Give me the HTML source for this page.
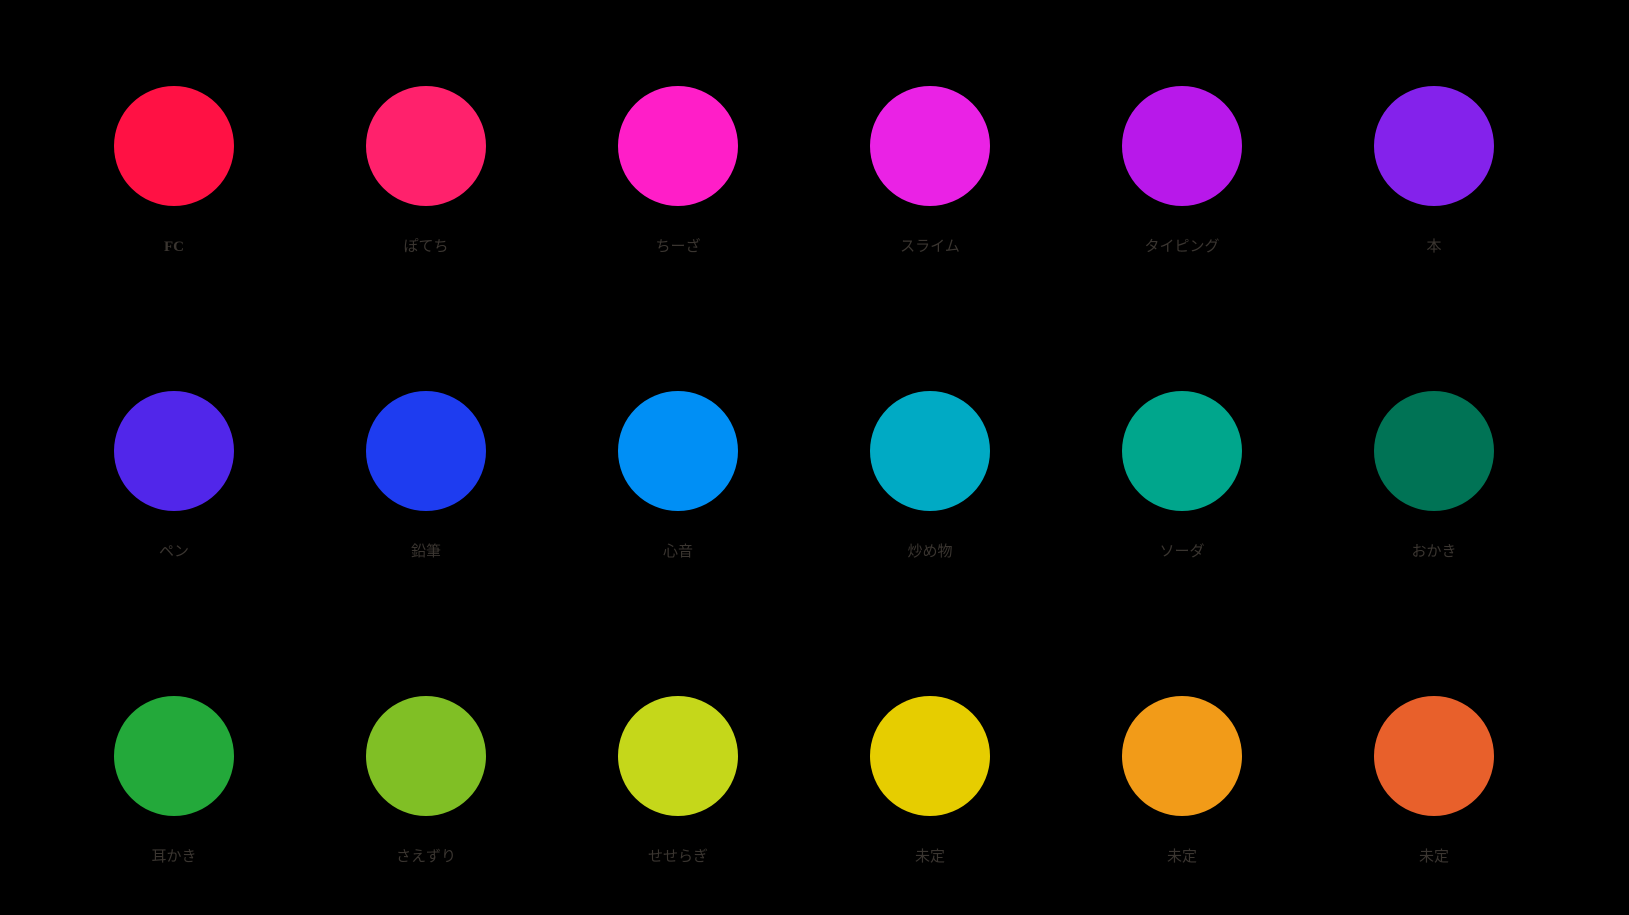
<!DOCTYPE html>
<html><head><meta charset="utf-8"><style>
html,body{margin:0;padding:0;background:#000;width:1629px;height:915px;overflow:hidden}
.c{position:absolute;width:120px;height:120px;border-radius:50%}
.l{position:absolute;width:200px;text-align:center;font-family:"Liberation Sans","Noto Sans CJK JP",sans-serif;font-size:15px;color:#3a3530;line-height:20px}
</style></head><body>
<div id="r"></div>
<script>
var xs=[174,426,678,930,1182,1434],ys=[146,451,756],ly=[247,552,857];
var cols=["#ff1144","#ff216c","#ff1ec8","#ea22e5","#b818ea","#8422eb","#5126ea","#1e3cf0","#008ff5","#00aac4","#00a68c","#007355","#23a93a","#80bf25","#c5d71a","#e6cd00","#f29b18","#e8602b"];
var names=["FC","ぽてち","ちーざ","スライム","タイピング","本","ペン","鉛筆","心音","炒め物","ソーダ","おかき","耳かき","さえずり","せせらぎ","未定","未定","未定"];
var h="";
for(var i=0;i<18;i++){var x=xs[i%6],r=Math.floor(i/6);
h+='<div class="c" style="left:'+(x-60)+'px;top:'+(ys[r]-60)+'px;background:'+cols[i]+'"></div>';
h+='<div class="l" style="left:'+(x-100)+'px;top:'+(ly[r]-10)+'px;'+(i==0?'font-family:Liberation Serif,serif;font-weight:bold;':'')+'">'+names[i]+'</div>';}
document.getElementById("r").innerHTML=h;
</script>
</body></html>
